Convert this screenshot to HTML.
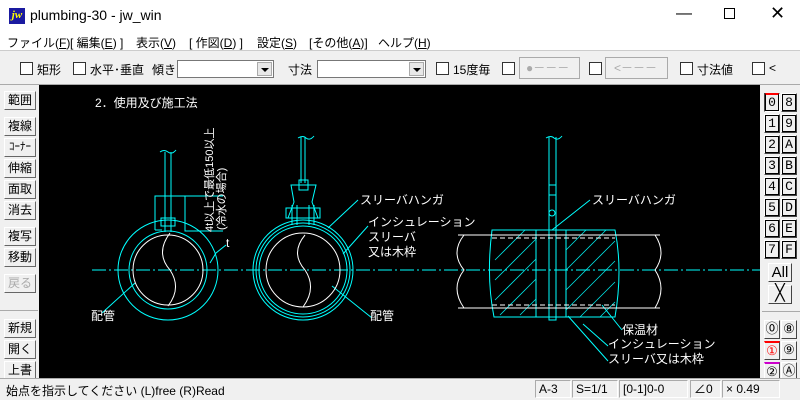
<!DOCTYPE html>
<html><head><meta charset="utf-8"><style>
*{margin:0;padding:0;box-sizing:border-box}
body{width:800px;height:400px;overflow:hidden;background:#f0f0f0;font-family:"Liberation Sans","Noto Sans CJK JP",sans-serif;font-size:12px;color:#000;position:relative}
.a{position:absolute;white-space:nowrap}
.title{top:0;left:0;width:800px;height:30px;background:#fff}
.menu{top:30px;left:0;width:800px;height:20px;background:#fff}
.cb{position:absolute;width:13px;height:13px;border:1px solid #333;background:#fff}
.combo{position:absolute;height:18px;border:1px solid #777;background:#fff}
.combo i{position:absolute;right:1px;top:1px;width:15px;height:14px;background:#e8e8e8;border:1px solid #aaa}
.combo i:after{content:"";position:absolute;left:3px;top:5px;border:4px solid transparent;border-top:4px solid #000;border-bottom:0}
.lb{position:absolute;left:4px;width:32px;height:19px;background:#f0f0f0;border:1px solid;border-color:#fff #666 #666 #fff;font-size:12px;text-align:center;line-height:17px}
.rb{position:absolute;width:16px;height:19px;background:#f0f0f0;border:1px solid;border-color:#fff #444 #444 #fff;font-family:"Liberation Mono",monospace;font-size:13px;text-align:center;line-height:17px}
.rb b{font-weight:normal;border:1px solid #000;padding:0 2px;line-height:13px}
.sb{position:absolute;top:380px;height:18px;border:1px solid;border-color:#aaa #fff #fff #aaa;font-size:12px;line-height:16px;padding-left:3px}
</style></head><body>
<div class="a title"></div>
<div class="a" style="left:9px;top:8px;width:16px;height:16px;background:#1a1aa0;color:#ff0;font:italic bold 11px 'Liberation Serif',serif;line-height:15px;text-align:center">jw</div>
<div class="a" style="left:30px;top:7px;font-size:14px">plumbing-30 - jw_win</div>
<div class="a" style="left:676px;top:5px;font-size:16px">&#8212;</div>
<div class="a" style="left:724px;top:8px;width:11px;height:11px;border:1px solid #000"></div>
<div class="a" style="left:770px;top:3px;font-size:18px">&#10005;</div>
<div class="a menu"></div>
<div class="a" style="left:7px;top:34px;font-size:12px;word-spacing:0">ファイル(<u>F</u>)</div>
<div class="a" style="left:70px;top:34px">[ 編集(<u>E</u>) ]</div>
<div class="a" style="left:136px;top:34px">表示(<u>V</u>)</div>
<div class="a" style="left:189px;top:34px">[ 作図(<u>D</u>) ]</div>
<div class="a" style="left:257px;top:34px">設定(<u>S</u>)</div>
<div class="a" style="left:309px;top:34px">[その他(<u>A</u>)]</div>
<div class="a" style="left:378px;top:34px">ヘルプ(<u>H</u>)</div>
<div class="a" style="left:0;top:50px;width:800px;height:1px;background:#ccc"></div>
<div class="cb" style="left:20px;top:62px"></div><div class="a" style="left:37px;top:61px">矩形</div>
<div class="cb" style="left:73px;top:62px"></div><div class="a" style="left:90px;top:61px">水平･垂直</div>
<div class="a" style="left:152px;top:61px">傾き</div>
<div class="combo" style="left:177px;top:60px;width:97px"><i></i></div>
<div class="a" style="left:288px;top:61px">寸法</div>
<div class="combo" style="left:317px;top:60px;width:109px"><i></i></div>
<div class="cb" style="left:436px;top:62px"></div><div class="a" style="left:453px;top:61px">15度毎</div>
<div class="cb" style="left:502px;top:62px"></div>
<div class="a" style="left:519px;top:57px;width:61px;height:22px;border:1px solid #aaa;color:#aaa;line-height:20px;padding-left:6px">●－－－</div>
<div class="cb" style="left:589px;top:62px"></div>
<div class="a" style="left:605px;top:57px;width:63px;height:22px;border:1px solid #aaa;color:#aaa;line-height:20px;padding-left:8px">&lt;－－－</div>
<div class="cb" style="left:680px;top:62px"></div><div class="a" style="left:697px;top:61px">寸法値</div>
<div class="cb" style="left:752px;top:62px"></div><div class="a" style="left:769px;top:61px">&lt;</div>
<div class="a" style="left:0;top:84px;width:800px;height:1px;background:#aaa"></div>
<div class="a" style="left:39px;top:85px;width:721px;height:293px;background:#000"></div>
<div class="lb" style="top:91px">範囲</div>
<div class="lb" style="top:117px">複線</div>
<div class="lb" style="top:138px;font-size:11px">ｺｰﾅｰ</div>
<div class="lb" style="top:159px">伸縮</div>
<div class="lb" style="top:180px">面取</div>
<div class="lb" style="top:201px">消去</div>
<div class="lb" style="top:227px">複写</div>
<div class="lb" style="top:248px">移動</div>
<div class="lb" style="top:274px;color:#aaa">戻る</div>
<div class="a" style="left:0;top:310px;width:38px;height:1px;background:#aaa"></div>
<div class="lb" style="top:319px">新規</div>
<div class="lb" style="top:340px">開く</div>
<div class="lb" style="top:361px">上書</div>
<div id="rp"></div>
<svg class="a" style="left:0;top:0" width="800" height="400" viewBox="0 0 800 400">
<g fill="none" stroke="#0ff" stroke-width="1">
<line x1="92" y1="270" x2="760" y2="270" stroke-dasharray="14 3 2 3"/>
<circle cx="168" cy="270" r="50"/><circle cx="168" cy="270" r="39"/>
<path d="M155 230 V196 H223 M185 196 V231 H223 M162 230 h-7"/>
<path d="M165 152 V232 M171 152 V232 M160 152 q4 -3 8 0 q4 3 8 -2"/>
<rect x="161" y="218" width="14" height="8"/>
<path d="M226 245 l-10 8 l-6 10 M102 313 l33 -30"/>
<circle cx="303" cy="270" r="50"/><circle cx="303" cy="270" r="44"/><circle cx="303" cy="270" r="47"/>
<path d="M301 137 V183 M305 137 V183 M298 138 q5 -3 8 0 q4 3 8 -2"/>
<rect x="299" y="180" width="9" height="10"/>
<path d="M291 185 H316 L312 202 L318 218 H288 L294 202 Z"/>
<rect x="286" y="208" width="34" height="10"/>
<path d="M292 205 V225 M297 205 V225 M309 205 V225 M314 205 V225"/>
<path d="M358 200 l-30 28 M368 226 l-25 28 M372 318 l-40 -32"/>
<path d="M549 137 V320 H556 V137 M546 138 q5 -3 8 0 q4 3 8 -2 M549 185 H556 M549 195 H556"/>
<circle cx="552" cy="213" r="3"/>
<path d="M492 230 H615 q8 40 0 87 H494 q-8 -40 -2 -87 Z"/>
<path d="M536 230 V317 M566 230 V317"/>
<path d="M590 200 l-38 30 M622 330 l-20 -25 M608 346 l-25 -22 M608 361 l-40 -45"/>
<g stroke-width="0.8" opacity="0.9">
<path d="M495 260 l30 -30 M495 280 l41 -41 M495 300 l41 -41 M500 315 l36 -36 M520 315 l16 -16 M566 250 l20 -20 M566 270 l40 -40 M566 290 l49 -49 M566 310 l49 -49 M580 317 l35 -35 M600 317 l15 -15"/>
</g>
</g>
<g fill="none" stroke="#fff" stroke-width="1">
<circle cx="168" cy="270" r="35"/><circle cx="303" cy="270" r="37"/>
<path d="M170 233 q-15 20 0 37 q12 18 -2 36 M305 235 q-15 18 0 35 q12 18 -2 37"/>
<path d="M458 235 H660 M458 308 H660 M464 235 q-14 18 0 35 q-14 18 0 38 M655 235 q12 18 0 35 q12 18 0 38"/>
<path d="M492 238 H615 M492 305 H615" stroke-dasharray="5 3"/>
</g>
<g fill="#fff" font-family="'Liberation Sans','Noto Sans CJK JP',sans-serif" font-size="12">
<text x="95" y="107">2．使用及び施工法</text>
<text x="91" y="320">配管</text><text x="226" y="247">t</text>
<text transform="translate(213,232) rotate(-90)" font-size="11">4t以上で最低150以上</text>
<text transform="translate(225,230) rotate(-90)" font-size="11">(冷水の場合)</text>
<text x="360" y="204">スリーバハンガ</text>
<text x="368" y="226">インシュレーション</text>
<text x="368" y="241">スリーバ</text>
<text x="368" y="256">又は木枠</text>
<text x="370" y="320">配管</text>
<text x="592" y="204">スリーバハンガ</text>
<text x="622" y="334">保温材</text>
<text x="608" y="348">インシュレーション</text>
<text x="608" y="363">スリーバ又は木枠</text>
</g>
</svg>
<div class="rb" style="left:764px;top:93px;border-color:#444 #fff #fff #444"><b style="border-top:2px solid red">0</b></div>
<div class="rb" style="left:781px;top:93px"><b>8</b></div>
<div class="rb" style="left:764px;top:114px"><b>1</b></div><div class="rb" style="left:781px;top:114px"><b>9</b></div>
<div class="rb" style="left:764px;top:135px"><b>2</b></div><div class="rb" style="left:781px;top:135px"><b>A</b></div>
<div class="rb" style="left:764px;top:156px"><b>3</b></div><div class="rb" style="left:781px;top:156px"><b>B</b></div>
<div class="rb" style="left:764px;top:177px"><b>4</b></div><div class="rb" style="left:781px;top:177px"><b>C</b></div>
<div class="rb" style="left:764px;top:198px"><b>5</b></div><div class="rb" style="left:781px;top:198px"><b>D</b></div>
<div class="rb" style="left:764px;top:219px"><b>6</b></div><div class="rb" style="left:781px;top:219px"><b>E</b></div>
<div class="rb" style="left:764px;top:240px"><b>7</b></div><div class="rb" style="left:781px;top:240px"><b>F</b></div>
<div class="rb" style="left:768px;top:263px;width:24px;font-family:'Liberation Sans';font-size:15px">All</div>
<div class="rb" style="left:768px;top:285px;width:24px;font-size:16px">&#x2573;</div>
<div class="a" style="left:762px;top:311px;width:38px;height:1px;background:#aaa"></div>
<div class="rb" style="left:764px;top:320px;border-radius:0">⓪</div><div class="rb" style="left:781px;top:320px">⑧</div>
<div class="rb" style="left:764px;top:341px;color:red;border-top:2px solid red">①</div><div class="rb" style="left:781px;top:341px">⑨</div>
<div class="rb" style="left:764px;top:362px;border-top:2px solid #c0c">②</div><div class="rb" style="left:781px;top:362px">Ⓐ</div>
<div class="a" style="left:0;top:378px;width:800px;height:22px;background:#f0f0f0;border-top:1px solid #aaa"></div>
<div class="a" style="left:6px;top:382px">始点を指示してください (L)free (R)Read</div>
<div class="sb" style="left:535px;width:36px">A-3</div>
<div class="sb" style="left:572px;width:46px">S=1/1</div>
<div class="sb" style="left:619px;width:69px">[0-1]0-0</div>
<div class="sb" style="left:690px;width:31px">∠0</div>
<div class="sb" style="left:722px;width:58px">× 0.49</div>
</body></html>
